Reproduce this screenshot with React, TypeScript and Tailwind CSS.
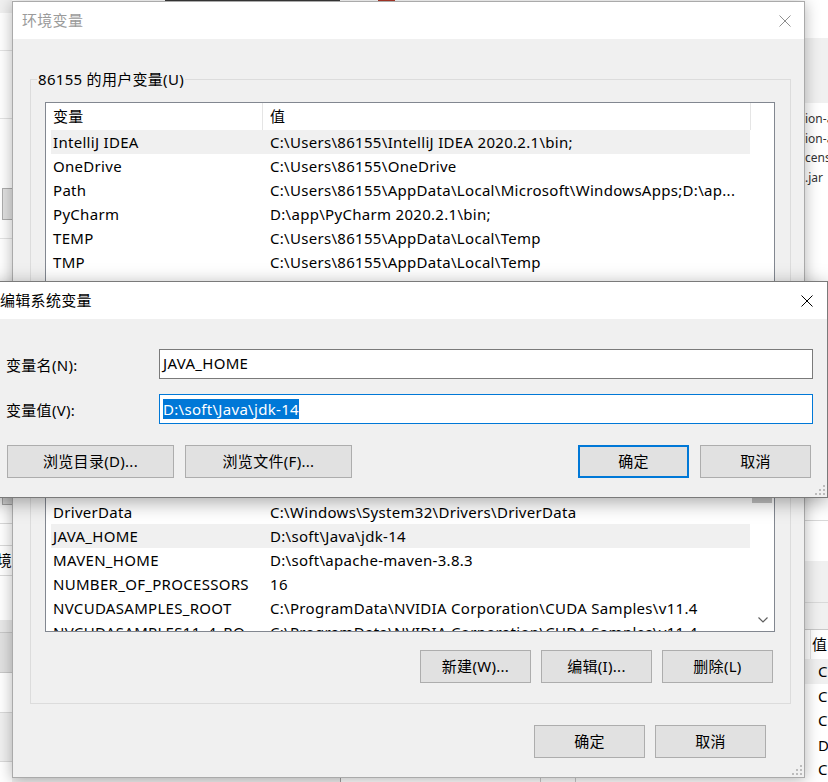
import clsx from "clsx";

type Item = { name: string; value: string; hl?: boolean };

const userRows: Item[] = [
  { name: "IntelliJ IDEA", value: "C:\\Users\\86155\\IntelliJ IDEA 2020.2.1\\bin;", hl: true },
  { name: "OneDrive", value: "C:\\Users\\86155\\OneDrive" },
  { name: "Path", value: "C:\\Users\\86155\\AppData\\Local\\Microsoft\\WindowsApps;D:\\ap..." },
  { name: "PyCharm", value: "D:\\app\\PyCharm 2020.2.1\\bin;" },
  { name: "TEMP", value: "C:\\Users\\86155\\AppData\\Local\\Temp" },
  { name: "TMP", value: "C:\\Users\\86155\\AppData\\Local\\Temp" },
];

const systemRows: Item[] = [
  { name: "CUDA_PATH_V11_4", value: "C:\\Program Files\\NVIDIA GPU Computing Toolkit\\CUDA\\v11.4" },
  { name: "DriverData", value: "C:\\Windows\\System32\\Drivers\\DriverData" },
  { name: "JAVA_HOME", value: "D:\\soft\\Java\\jdk-14", hl: true },
  { name: "MAVEN_HOME", value: "D:\\soft\\apache-maven-3.8.3" },
  { name: "NUMBER_OF_PROCESSORS", value: "16" },
  { name: "NVCUDASAMPLES_ROOT", value: "C:\\ProgramData\\NVIDIA Corporation\\CUDA Samples\\v11.4" },
  { name: "NVCUDASAMPLES11_4_RO...", value: "C:\\ProgramData\\NVIDIA Corporation\\CUDA Samples\\v11.4" },
];

const Btn = ({ label, wide, primary }: { label: string; wide?: boolean; primary?: boolean }) => (
  <div
    className={clsx(
      "flex h-[33px] items-center justify-center bg-[#e1e1e1] text-[15px] text-black",
      wide ? "w-[167px]" : "w-[111px]",
      primary ? "border-2 border-[#0078d7]" : "border border-[#adadad]"
    )}
  >
    {label}
  </div>
);

const CloseX = ({ color }: { color: string }) => (
  <svg width="12" height="12" viewBox="0 0 12 12">
    <path d="M0.5 0.5 L11.5 11.5 M11.5 0.5 L0.5 11.5" stroke={color} strokeWidth="1" />
  </svg>
);

const Grip = () => (
  <svg width="10" height="10" viewBox="0 0 10 10" className="absolute right-[2px] bottom-[2px]">
    {[
      [8, 0],
      [4, 4],
      [8, 4],
      [0, 8],
      [4, 8],
      [8, 8],
    ].map(([x, y]) => (
      <rect key={`${x}-${y}`} x={x} y={y} width="2" height="2" fill="#bcbcbc" />
    ))}
  </svg>
);

const Row = ({ name, value, hl }: Item) => (
  <div className={clsx("ml-[5px] flex h-[24px] w-[699px] shrink-0 items-center whitespace-nowrap", hl && "bg-[#f0f0f0]")}>
    <div className="w-[217px] shrink-0 overflow-hidden pl-[2px]">{name}</div>
    <div className="pl-[2px]">{value}</div>
  </div>
);

// background window bits that peek out around the dialogs
const LeftStrip = () => (
  <div className="flex w-[12px] shrink-0 flex-col overflow-hidden bg-white">
    <div className="h-[13px] bg-[#f0f0f0]" />
    <div className="h-[37px]" />
    <div className="h-[1px] bg-[#e3e3e3]" />
    <div className="h-[67px]" />
    <div className="h-[1px] bg-[#e3e3e3]" />
    <div className="h-[69px]" />
    <div className="h-[32px] pl-[2px]">
      <div className="h-full border border-r-0 border-[#adadad] bg-[#e1e1e1]" />
    </div>
    <div className="h-[18px]" />
    <div className="h-[1px] bg-[#e3e3e3]" />
    <div className="h-[258px]" />
    <div className="h-[8px] pl-[2px]">
      <div className="h-full border border-r-0 border-t-0 border-[#adadad] bg-[#e1e1e1]" />
    </div>
    <div className="h-[18px]" />
    <div className="h-[1px] bg-[#d9d9d9]" />
    <div className="h-[21px]" />
    <div className="h-[1px] bg-[#d9d9d9]" />
    <div className="flex h-[29px] items-center justify-end whitespace-nowrap text-[15px] text-black">环境</div>
    <div className="h-[1px] bg-[#d9d9d9]" />
    <div className="h-[44px]" />
    <div className="h-[12px] bg-[#e8e8e8]" />
    <div className="h-[41px] border-y border-[#c8c8c8] bg-[#e1e1e1]" />
    <div className="h-[39px]" />
    <div className="h-[1px] bg-[#d9d9d9]" />
    <div className="h-[48px] bg-[#f0f0f0]" />
    <div className="h-[1px] bg-[#d9d9d9]" />
    <div className="flex-1" />
  </div>
);

const MiddleStrip = () => (
  <div className="flex w-[793px] shrink-0 flex-col bg-white">
    <div className="flex h-[1px]">
      <div className="w-[153px]" />
      <div className="w-[175px] bg-[#3a3a3a]" />
      <div className="w-[38px]" />
      <div className="w-[17px] bg-[#b23a2a]" />
    </div>
    <div className="flex-1" />
    <div className="flex h-[5px]">
      <div className="w-[328px] bg-[#f0f0f0]" />
      <div className="w-[1px] bg-[#a0a0a0]" />
      <div className="w-[199px] bg-white" />
      <div className="w-[1px] bg-[#c8c8c8]" />
      <div className="w-[34px]" />
      <div className="w-[1px] bg-[#c8c8c8]" />
    </div>
  </div>
);

const RightStrip = () => (
  <div className="flex w-[23px] shrink-0 flex-col overflow-hidden whitespace-nowrap bg-white text-black">
    <div className="h-[39px]" />
    <div className="h-[66px] bg-[#f0f0f0]" />
    <div className="h-[6px]" />
    {["ion-a", "ion-a", "cense", ".jar"].map((t, i) => (
      <div key={i} className="flex h-[20px] items-center text-[12px] tracking-normal text-[#333]">
        {t}
      </div>
    ))}
    <div className="h-[338px]" />
    <div className="h-[1px] bg-[#d9d9d9]" />
    <div className="h-[40px]" />
    <div className="h-[42px] bg-[#f0f0f0]" />
    <div className="h-[1px] bg-[#d9d9d9]" />
    <div className="h-[26px] bg-[#f0f0f0]" />
    <div className="h-[1px] bg-[#c8c8c8]" />
    <div className="flex h-[30px] items-center">
      <div className="h-full w-[6px] border-r border-[#e5e5e5]" />
      <div className="pl-[1px] text-[15px]">值</div>
    </div>
    {["C", "C", "C", "D", "C"].map((t, i) => (
      <div key={i} className={clsx("flex h-[25px] items-center pl-[13px] text-[15px]", i === 0 && "bg-[#f0f0f0]")}>
        {t}
      </div>
    ))}
  </div>
);

const EnvDialog = () => (
  <div className="absolute top-[1px] left-[12px] flex h-[777px] w-[793px] flex-col border border-[#aaaaaa] bg-[#f0f0f0] shadow-[0_2px_14px_rgba(0,0,0,0.3)]">
    <div className="flex h-[37px] shrink-0 items-center justify-between bg-white pr-[13px] pl-[9px]">
      <span className="text-[15px] text-[#9b9b9b]">环境变量</span>
      <CloseX color="#8f8f8f" />
    </div>

    <div className="flex flex-1 flex-col pl-[17px]">
      <div className="relative mt-[40px] flex h-[625px] w-[761px] flex-col border border-[#dcdcdc] pt-[22px] pb-[20px] pl-[14px]">
        <span className="absolute -top-[11px] left-[6px] bg-[#f0f0f0] px-[1px] text-[15px] leading-[20px] text-black">
          86155 的用户变量(U)
        </span>

        <div className="flex h-[530px] w-[730px] overflow-hidden border border-[#828790] bg-white text-[15px] text-black">
          <div className="flex w-[706px] shrink-0 flex-col">
            <div className="flex h-[27px] shrink-0 items-center">
              <div className="flex h-full w-[217px] items-center border-r border-[#e5e5e5] pl-[7px]">变量</div>
              <div className="flex h-full w-[488px] items-center border-r border-[#e5e5e5] pl-[7px]">值</div>
            </div>
            {userRows.map((r) => (
              <Row key={r.name} {...r} />
            ))}
            <div className="h-[202px] shrink-0" />
            {systemRows.map((r) => (
              <Row key={r.name} {...r} />
            ))}
          </div>
          <div className="flex w-[22px] flex-col">
            <div className="h-[327px]" />
            <div className="mr-[2px] h-[73px] bg-[#c2c2c2]" />
            <div className="flex-1" />
            <div className="flex h-[22px] items-center justify-center">
              <svg width="10" height="6" viewBox="0 0 10 6">
                <path d="M0.5 0.5 L5 5 L9.5 0.5" fill="none" stroke="#606060" strokeWidth="1.2" />
              </svg>
            </div>
          </div>
        </div>

        <div className="mt-[18px] mr-[17px] flex justify-end gap-[10px]">
          <Btn label="新建(W)..." />
          <Btn label="编辑(I)..." />
          <Btn label="删除(L)" />
        </div>
      </div>

      <div className="mt-[21px] mr-[38px] flex justify-end gap-[10px]">
        <Btn label="确定" />
        <Btn label="取消" />
      </div>
    </div>
    <Grip />
  </div>
);

const EditDialog = () => (
  <div className="absolute top-[281px] -left-[12px] flex h-[217px] w-[840px] flex-col border border-[#7a7a7a] bg-[#f0f0f0] text-[15px] text-black shadow-[0_4px_18px_rgba(0,0,0,0.35)]">
    <div className="flex h-[37px] shrink-0 items-center justify-between bg-white pr-[14px] pl-[11px]">
      <span>编辑系统变量</span>
      <CloseX color="#000000" />
    </div>

    <div className="flex flex-1 flex-col pt-[30px] pr-[14px] pl-[17px]">
      <div className="flex h-[30px] items-center">
        <div className="w-[153px] pt-[3px]">变量名(N):</div>
        <div className="flex h-full flex-1 items-center border border-[#7a7a7a] bg-white pb-[2px] pl-[3px]">JAVA_HOME</div>
      </div>
      <div className="mt-[15px] flex h-[30px] items-center">
        <div className="w-[153px] pt-[3px]">变量值(V):</div>
        <div className="flex h-full flex-1 items-center border border-[#0078d7] bg-white pl-[3px]">
          <span className="bg-[#0078d7] leading-[20px] text-white">D:\soft\Java\jdk-14</span>
        </div>
      </div>

      <div className="mt-[21px] mr-[2px] ml-[1px] flex gap-[11px]">
        <Btn label="浏览目录(D)..." wide />
        <Btn label="浏览文件(F)..." wide />
        <div className="flex-1" />
        <Btn label="确定" primary />
        <Btn label="取消" />
      </div>
    </div>
    <Grip />
  </div>
);

export default function App() {
  return (
    <div className="relative h-[782px] w-[828px] overflow-hidden bg-white font-['Noto_Sans','Noto_Sans_CJK_SC',sans-serif] tracking-[0.3px]">
      <div className="flex h-full">
        <LeftStrip />
        <MiddleStrip />
        <RightStrip />
      </div>
      <EnvDialog />
      <EditDialog />
    </div>
  );
}
